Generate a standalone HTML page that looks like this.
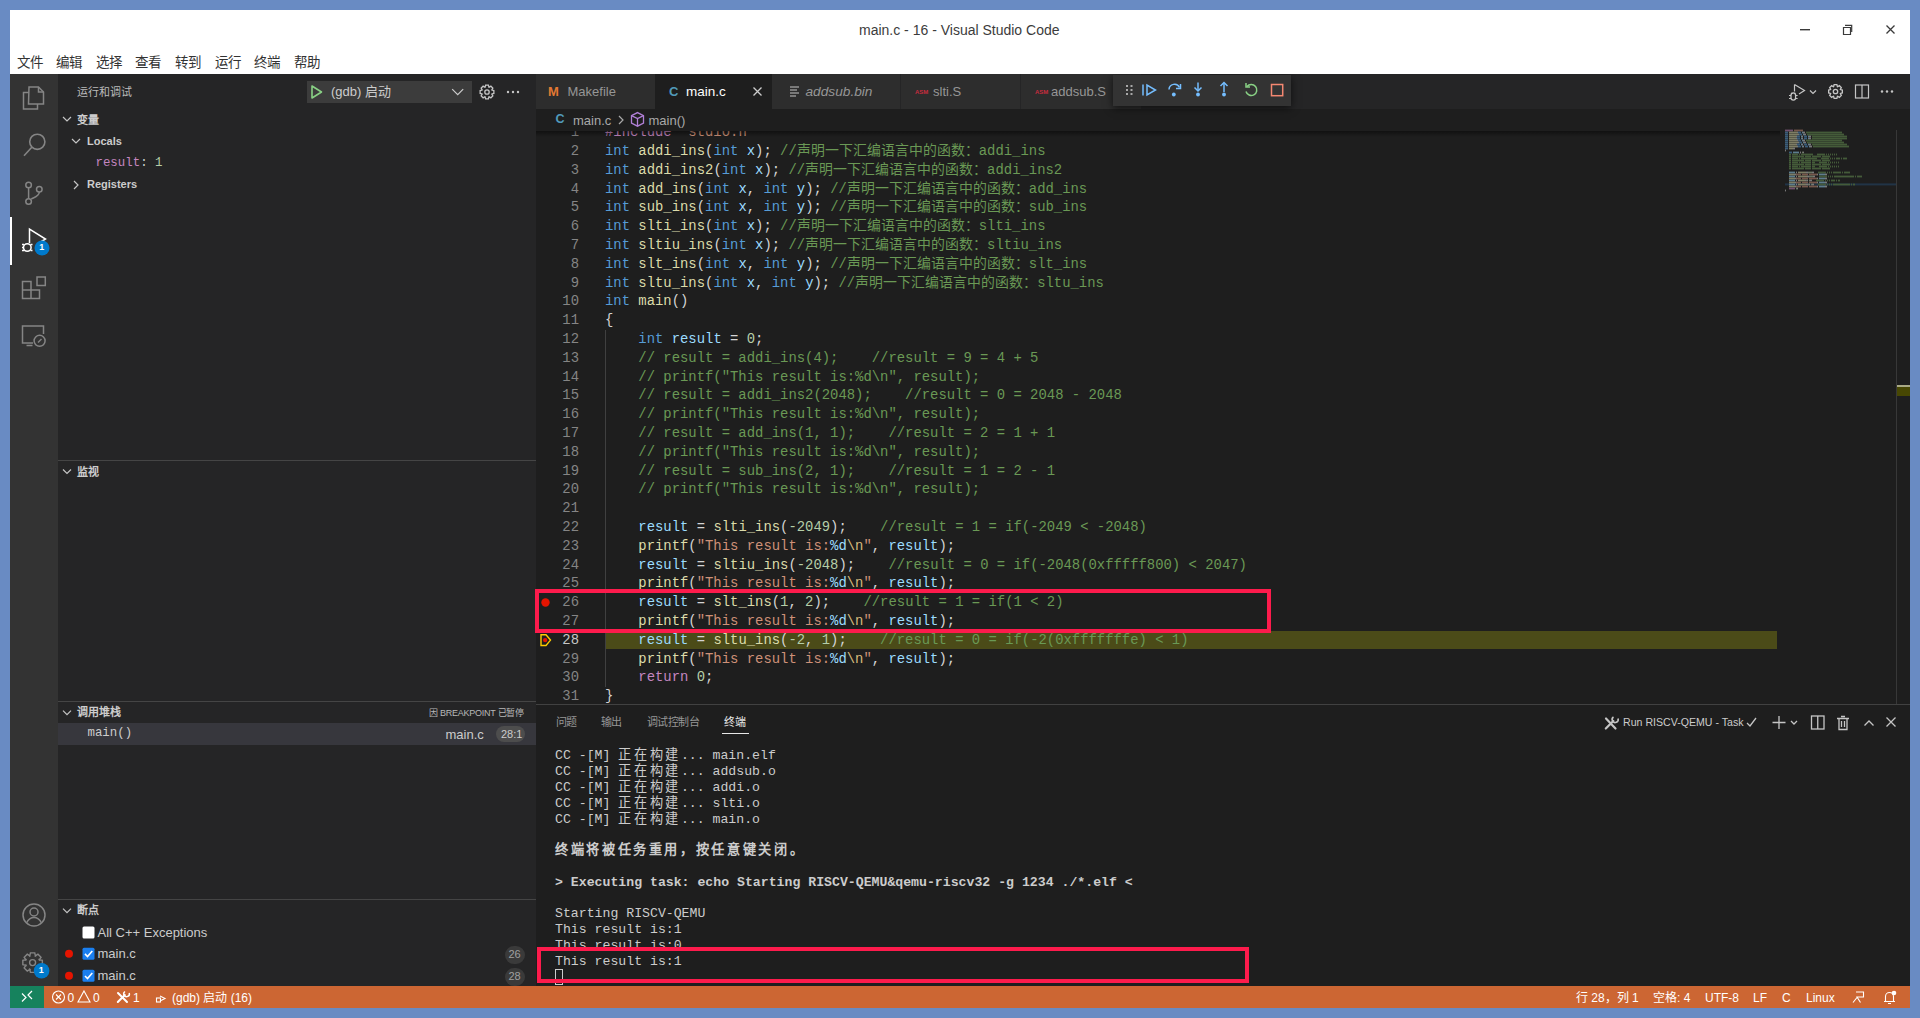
<!DOCTYPE html>
<html lang="zh-CN"><head><meta charset="utf-8"><title>VS Code</title><style>
*{margin:0;padding:0;box-sizing:border-box}
html,body{width:1920px;height:1018px;overflow:hidden;background:#698bc3;font-family:"Liberation Sans",sans-serif}
.a{position:absolute}
.t{position:absolute;white-space:pre;line-height:1}
.m{font-family:"Liberation Mono",monospace}
svg{position:absolute;overflow:visible}
.code{position:absolute;left:605px;white-space:pre;font-family:"Liberation Mono",monospace;font-size:13.9px;line-height:18.8px;height:18.8px;color:#d4d4d4}
.ln{position:absolute;left:536px;width:43px;text-align:right;white-space:pre;font-family:"Liberation Mono",monospace;font-size:13.9px;line-height:18.8px;color:#858585}
.term{position:absolute;left:555px;white-space:pre;font-family:"Liberation Mono",monospace;font-size:13.2px;line-height:16px;height:16px;color:#cccccc}
.cj{letter-spacing:2.64px}
.sb{font-size:11px;font-weight:bold;color:#cccccc}
</style></head>
<body>
<div class="a" style="left:10px;top:10px;width:1900px;height:998px;background:#1e1e1e;"></div>
<div class="a" style="left:10px;top:10px;width:1900px;height:64px;background:#ffffff;"></div>
<div class="t" style="left:859px;top:23px;font-size:14px;color:#3c3c3c;">main.c - 16 - Visual Studio Code</div>
<div class="t" style="left:16.5px;top:56px;font-size:13.5px;color:#333333;">文件</div>
<div class="t" style="left:56.1px;top:56px;font-size:13.5px;color:#333333;">编辑</div>
<div class="t" style="left:95.7px;top:56px;font-size:13.5px;color:#333333;">选择</div>
<div class="t" style="left:135.3px;top:56px;font-size:13.5px;color:#333333;">查看</div>
<div class="t" style="left:174.9px;top:56px;font-size:13.5px;color:#333333;">转到</div>
<div class="t" style="left:214.5px;top:56px;font-size:13.5px;color:#333333;">运行</div>
<div class="t" style="left:254.1px;top:56px;font-size:13.5px;color:#333333;">终端</div>
<div class="t" style="left:293.7px;top:56px;font-size:13.5px;color:#333333;">帮助</div>
<svg style="left:1800px;top:29px" width="12" height="2"><rect x="0" y="0" width="10" height="1.4" fill="#3a3a3a"/></svg>
<svg style="left:1842px;top:24px" width="12" height="12"><path d="M1.5 3.5h7v7h-7z" fill="none" stroke="#3a3a3a" stroke-width="1.2"/><path d="M3 1.3h6.7v6.8" fill="none" stroke="#3a3a3a" stroke-width="1.2"/></svg>
<svg style="left:1886px;top:25px" width="10" height="10"><path d="M0.5 0.5L8.5 8.5M8.5 0.5L0.5 8.5" stroke="#3a3a3a" stroke-width="1.3"/></svg>
<div class="a" style="left:10px;top:74px;width:48px;height:912px;background:#333333;"></div>
<div class="a" style="left:10px;top:217px;width:2px;height:48px;background:#ffffff;"></div>
<svg style="left:0;top:0" width="1" height="1"><g fill="none" stroke="#858585" stroke-width="1.5"><path d="M29 87h9.5l5 5v12h-15z"/><path d="M38.5 87v5h5"/><path d="M29 92.5h-5.5v16.5h14v-5"/></g></svg>
<svg style="left:0;top:0" width="1" height="1"><g fill="none" stroke="#858585" stroke-width="1.6"><circle cx="37.3" cy="141.8" r="7.6"/><path d="M31.8 147.3L24 155.8"/></g></svg>
<svg style="left:0;top:0" width="1" height="1"><g fill="none" stroke="#858585" stroke-width="1.5"><circle cx="28.6" cy="185" r="2.8"/><circle cx="39.3" cy="189.2" r="2.8"/><circle cx="28.6" cy="201.5" r="2.8"/><path d="M28.6 187.8v10.9"/><path d="M39.3 192c0 4-4 5-8 7"/></g></svg>
<svg style="left:0;top:0" width="1" height="1"><g fill="none" stroke="#ffffff" stroke-width="1.5"><path d="M29.5 243V229l16 10-8 5"/><circle cx="27.3" cy="247.5" r="3.8"/><path d="M22 244.5h2M22 247.5h2M22 250.5h2.5M30.5 244.5h2M30.5 250.5h2"/></g><circle cx="42" cy="248" r="7.5" fill="#007acc"/></svg>
<div class="t" style="left:39.2px;top:243px;font-size:9px;color:#ffffff;font-weight:bold">1</div>
<svg style="left:0;top:0" width="1" height="1"><g fill="none" stroke="#858585" stroke-width="1.5"><path d="M22.5 281.5h8.5v17h-8.5zM22.5 290h17v8.5h-8.5"/><path d="M37 277h8.3v8.5h-8.3z"/></g></svg>
<svg style="left:0;top:0" width="1" height="1"><g fill="none" stroke="#858585" stroke-width="1.5"><path d="M33 343h-10.5v-17h21v8"/><path d="M26.5 345.5h6"/><circle cx="39.6" cy="340.8" r="5.5"/><path d="M38 342.5l3.5-3.5"/></g></svg>
<svg style="left:0;top:0" width="1" height="1"><g fill="none" stroke="#858585" stroke-width="1.5"><circle cx="34" cy="915" r="11"/><circle cx="34" cy="912" r="4"/><path d="M26.5 923c2-4 4.5-5.5 7.5-5.5s5.5 1.5 7.5 5.5"/></g></svg>
<svg style="left:0;top:0" width="1" height="1"><g fill="none" stroke="#858585" stroke-width="1.4"><path d="M42.36 960.42 L42.36 964.78 L39.23 965.40 L39.27 965.31 L41.04 967.96 L37.96 971.04 L35.31 969.27 L35.40 969.23 L34.78 972.36 L30.42 972.36 L29.80 969.23 L29.89 969.27 L27.24 971.04 L24.16 967.96 L25.93 965.31 L25.97 965.40 L22.84 964.78 L22.84 960.42 L25.97 959.80 L25.93 959.89 L24.16 957.24 L27.24 954.16 L29.89 955.93 L29.80 955.97 L30.42 952.84 L34.78 952.84 L35.40 955.97 L35.31 955.93 L37.96 954.16 L41.04 957.24 L39.27 959.89 L39.23 959.80Z"/><circle cx="32.6" cy="962.6" r="3"/></g><circle cx="41.6" cy="970.7" r="7.8" fill="#007acc"/></svg>
<div class="t" style="left:38.8px;top:965.5px;font-size:9px;color:#ffffff;font-weight:bold">1</div>
<div class="a" style="left:58px;top:74px;width:478px;height:912px;background:#252526;"></div>
<div class="t" style="left:77px;top:87px;font-size:11px;color:#bbbbbb;">运行和调试</div>
<div class="a" style="left:307px;top:81px;width:165px;height:22px;background:#3c3c3c;"></div>
<svg style="left:0;top:0" width="1" height="1"><path d="M312 86v12l9.5-6z" fill="none" stroke="#89d185" stroke-width="1.6" stroke-linejoin="round"/><path d="M452.2 89.2l5.5 5.5 5.5-5.5" fill="none" stroke="#cccccc" stroke-width="1.2"/></svg>
<div class="t" style="left:331px;top:85px;font-size:13px;color:#cccccc;">(gdb) 启动</div>
<svg style="left:0;top:0" width="1" height="1"><g fill="none" stroke="#c5c5c5" stroke-width="1.3"><path d="M493.86 90.61 L493.86 93.39 L491.83 93.93 L491.78 94.05 L492.83 95.87 L490.87 97.83 L489.05 96.78 L488.93 96.83 L488.39 98.86 L485.61 98.86 L485.07 96.83 L484.95 96.78 L483.13 97.83 L481.17 95.87 L482.22 94.05 L482.17 93.93 L480.14 93.39 L480.14 90.61 L482.17 90.07 L482.22 89.95 L481.17 88.13 L483.13 86.17 L484.95 87.22 L485.07 87.17 L485.61 85.14 L488.39 85.14 L488.93 87.17 L489.05 87.22 L490.87 86.17 L492.83 88.13 L491.78 89.95 L491.83 90.07Z"/><circle cx="487" cy="92" r="2.2"/></g></svg>
<svg style="left:0;top:0" width="1" height="1"><g fill="#c5c5c5"><circle cx="508" cy="92" r="1.2"/><circle cx="513" cy="92" r="1.2"/><circle cx="518" cy="92" r="1.2"/></g></svg>
<svg style="left:0;top:0" width="1" height="1"><path d="M63 117l4 4 4-4" fill="none" stroke="#c5c5c5" stroke-width="1.2"/></svg>
<div class="t" style="left:77px;top:114.5px;font-size:11px;color:#cccccc;font-weight:bold">变量</div>
<svg style="left:0;top:0" width="1" height="1"><path d="M72 139l4 4 4-4" fill="none" stroke="#c5c5c5" stroke-width="1.2"/></svg>
<div class="t" style="left:87px;top:135.5px;font-size:11px;color:#cccccc;font-weight:bold">Locals</div>
<div class="t m" style="left:95.5px;top:156.5px;font-size:12.4px;color:#c586c0">result<span style="color:#cccccc">: </span><span style="color:#b5cea8">1</span></div>
<svg style="left:0;top:0" width="1" height="1"><path d="M74 181l4 4-4 4" fill="none" stroke="#c5c5c5" stroke-width="1.2"/></svg>
<div class="t" style="left:87px;top:179px;font-size:11px;color:#cccccc;font-weight:bold">Registers</div>
<div class="a" style="left:58px;top:460px;width:478px;height:1px;background:#454545;"></div>
<svg style="left:0;top:0" width="1" height="1"><path d="M63 469.5l4 4 4-4" fill="none" stroke="#c5c5c5" stroke-width="1.2"/></svg>
<div class="t" style="left:77px;top:467px;font-size:11px;color:#cccccc;font-weight:bold">监视</div>
<div class="a" style="left:58px;top:701px;width:478px;height:1px;background:#454545;"></div>
<svg style="left:0;top:0" width="1" height="1"><path d="M63 710.7l4 4 4-4" fill="none" stroke="#c5c5c5" stroke-width="1.2"/></svg>
<div class="t" style="left:77px;top:707px;font-size:11px;color:#cccccc;font-weight:bold">调用堆栈</div>
<div class="t" style="left:429px;top:709.2px;font-size:9px;color:#b8b8b8;letter-spacing:-0.25px">因 BREAKPOINT 已暂停</div>
<div class="a" style="left:58px;top:723px;width:478px;height:22px;background:#37373d;"></div>
<div class="t m" style="left:87.5px;top:727px;font-size:12.4px;color:#cccccc;">main()</div>
<div class="t" style="left:445.5px;top:728px;font-size:13px;color:#cccccc;">main.c</div>
<div class="a" style="left:496px;top:726px;width:29px;height:16px;background:#4d4d4d;border-radius:8px"></div>
<div class="t" style="left:501px;top:729px;font-size:11px;color:#cccccc;">28:1</div>
<div class="a" style="left:58px;top:899px;width:478px;height:1px;background:#454545;"></div>
<svg style="left:0;top:0" width="1" height="1"><path d="M63 908.7l4 4 4-4" fill="none" stroke="#c5c5c5" stroke-width="1.2"/></svg>
<div class="t" style="left:77px;top:905px;font-size:11px;color:#cccccc;font-weight:bold">断点</div>
<svg style="left:0;top:0" width="1" height="1"><rect x="82.5" y="926.5" width="12" height="12" rx="1.5" fill="#ffffff"/></svg>
<div class="t" style="left:97.5px;top:926px;font-size:13px;color:#cccccc;">All C++ Exceptions</div>
<svg style="left:0;top:0" width="1" height="1"><circle cx="69" cy="953.7" r="4" fill="#e51400"/></svg>
<svg style="left:0;top:0" width="1" height="1"><rect x="82.5" y="947.7" width="12" height="12" rx="1.5" fill="#1a7ff0"/><path d="M85.0 953.9000000000001l2.5 2.6 4.8-5.6" fill="none" stroke="#fff" stroke-width="1.6"/></svg>
<div class="t" style="left:97.5px;top:947.2px;font-size:13px;color:#cccccc;">main.c</div>
<div class="a" style="left:505px;top:945.7px;width:20px;height:18px;background:#3a3a3a;border-radius:9px"></div>
<div class="t" style="left:508.5px;top:949.2px;font-size:11px;color:#a0a0a0;">26</div>
<svg style="left:0;top:0" width="1" height="1"><circle cx="69" cy="975.8" r="4" fill="#e51400"/></svg>
<svg style="left:0;top:0" width="1" height="1"><rect x="82.5" y="969.8" width="12" height="12" rx="1.5" fill="#1a7ff0"/><path d="M85.0 976.0l2.5 2.6 4.8-5.6" fill="none" stroke="#fff" stroke-width="1.6"/></svg>
<div class="t" style="left:97.5px;top:969.3px;font-size:13px;color:#cccccc;">main.c</div>
<div class="a" style="left:505px;top:967.8px;width:20px;height:18px;background:#3a3a3a;border-radius:9px"></div>
<div class="t" style="left:508.5px;top:971.3px;font-size:11px;color:#a0a0a0;">28</div>
<div class="a" style="left:536px;top:74px;width:1374px;height:35px;background:#252526;"></div>
<div class="a" style="left:536px;top:74px;width:119px;height:35px;background:#2d2d2d;"></div>
<div class="a" style="left:655px;top:74px;width:117px;height:35px;background:#1e1e1e;"></div>
<div class="a" style="left:772px;top:74px;width:128px;height:35px;background:#2d2d2d;"></div>
<div class="a" style="left:901px;top:74px;width:119px;height:35px;background:#2d2d2d;"></div>
<div class="a" style="left:1021px;top:74px;width:120px;height:35px;background:#2d2d2d;"></div>
<div class="t" style="left:548px;top:85px;font-size:13px;color:#e37933;font-weight:bold">M</div>
<div class="t" style="left:567.5px;top:85px;font-size:13px;color:#969696;">Makefile</div>
<div class="t" style="left:669px;top:85px;font-size:13px;color:#519aba;font-weight:bold">C</div>
<div class="t" style="left:686px;top:84.5px;font-size:13.5px;color:#ffffff;">main.c</div>
<svg style="left:0;top:0" width="1" height="1"><path d="M753.5 87.5l8 8M761.5 87.5l-8 8" stroke="#cccccc" stroke-width="1.3"/></svg>
<svg style="left:0;top:0" width="1" height="1"><path d="M790 87h9M790 90h7M790 93h9M790 96h6" stroke="#c5c5c5" stroke-width="1.2"/></svg>
<div class="t" style="left:805.5px;top:84.5px;font-size:13.7px;color:#969696;font-style:italic">addsub.bin</div>
<div class="t" style="left:915px;top:88.5px;font-size:6px;color:#c72c3e;font-weight:bold">ASM</div>
<div class="t" style="left:933px;top:85px;font-size:13px;color:#969696;">slti.S</div>
<div class="t" style="left:1035px;top:88.5px;font-size:6px;color:#c72c3e;font-weight:bold">ASM</div>
<div class="t" style="left:1051px;top:85px;font-size:13px;color:#969696;">addsub.S</div>
<div class="a" style="left:536px;top:109px;width:1374px;height:22px;background:#1e1e1e;"></div>
<div class="a" style="left:605px;top:630.7px;width:1172px;height:18.8px;background:#4b4b18;"></div>
<div class="a" style="left:605px;top:329.9px;width:1px;height:357.2px;background:#404040"></div>
<div class="ln" style="top:123.1px;color:#858585">1</div>
<div class="code" style="top:123.1px"><span style="color:#c586c0">#include</span> <span style="color:#ce9178">"stdio.h"</span></div>
<div class="ln" style="top:141.9px;color:#858585">2</div>
<div class="code" style="top:141.9px"><span style="color:#569cd6">int</span> <span style="color:#dcdcaa">addi_ins</span>(<span style="color:#569cd6">int</span> <span style="color:#9cdcfe">x</span>); <span style="color:#6a9955">//声明一下汇编语言中的函数：addi_ins</span></div>
<div class="ln" style="top:160.7px;color:#858585">3</div>
<div class="code" style="top:160.7px"><span style="color:#569cd6">int</span> <span style="color:#dcdcaa">addi_ins2</span>(<span style="color:#569cd6">int</span> <span style="color:#9cdcfe">x</span>); <span style="color:#6a9955">//声明一下汇编语言中的函数：addi_ins2</span></div>
<div class="ln" style="top:179.5px;color:#858585">4</div>
<div class="code" style="top:179.5px"><span style="color:#569cd6">int</span> <span style="color:#dcdcaa">add_ins</span>(<span style="color:#569cd6">int</span> <span style="color:#9cdcfe">x</span>, <span style="color:#569cd6">int</span> <span style="color:#9cdcfe">y</span>); <span style="color:#6a9955">//声明一下汇编语言中的函数：add_ins</span></div>
<div class="ln" style="top:198.3px;color:#858585">5</div>
<div class="code" style="top:198.3px"><span style="color:#569cd6">int</span> <span style="color:#dcdcaa">sub_ins</span>(<span style="color:#569cd6">int</span> <span style="color:#9cdcfe">x</span>, <span style="color:#569cd6">int</span> <span style="color:#9cdcfe">y</span>); <span style="color:#6a9955">//声明一下汇编语言中的函数：sub_ins</span></div>
<div class="ln" style="top:217.1px;color:#858585">6</div>
<div class="code" style="top:217.1px"><span style="color:#569cd6">int</span> <span style="color:#dcdcaa">slti_ins</span>(<span style="color:#569cd6">int</span> <span style="color:#9cdcfe">x</span>); <span style="color:#6a9955">//声明一下汇编语言中的函数：slti_ins</span></div>
<div class="ln" style="top:235.9px;color:#858585">7</div>
<div class="code" style="top:235.9px"><span style="color:#569cd6">int</span> <span style="color:#dcdcaa">sltiu_ins</span>(<span style="color:#569cd6">int</span> <span style="color:#9cdcfe">x</span>); <span style="color:#6a9955">//声明一下汇编语言中的函数：sltiu_ins</span></div>
<div class="ln" style="top:254.7px;color:#858585">8</div>
<div class="code" style="top:254.7px"><span style="color:#569cd6">int</span> <span style="color:#dcdcaa">slt_ins</span>(<span style="color:#569cd6">int</span> <span style="color:#9cdcfe">x</span>, <span style="color:#569cd6">int</span> <span style="color:#9cdcfe">y</span>); <span style="color:#6a9955">//声明一下汇编语言中的函数：slt_ins</span></div>
<div class="ln" style="top:273.5px;color:#858585">9</div>
<div class="code" style="top:273.5px"><span style="color:#569cd6">int</span> <span style="color:#dcdcaa">sltu_ins</span>(<span style="color:#569cd6">int</span> <span style="color:#9cdcfe">x</span>, <span style="color:#569cd6">int</span> <span style="color:#9cdcfe">y</span>); <span style="color:#6a9955">//声明一下汇编语言中的函数：sltu_ins</span></div>
<div class="ln" style="top:292.3px;color:#858585">10</div>
<div class="code" style="top:292.3px"><span style="color:#569cd6">int</span> <span style="color:#dcdcaa">main</span>()</div>
<div class="ln" style="top:311.1px;color:#858585">11</div>
<div class="code" style="top:311.1px">{</div>
<div class="ln" style="top:329.9px;color:#858585">12</div>
<div class="code" style="top:329.9px">    <span style="color:#569cd6">int</span> <span style="color:#9cdcfe">result</span> = <span style="color:#b5cea8">0</span>;</div>
<div class="ln" style="top:348.7px;color:#858585">13</div>
<div class="code" style="top:348.7px">    <span style="color:#6a9955">// result = addi_ins(4);    //result = 9 = 4 + 5</span></div>
<div class="ln" style="top:367.5px;color:#858585">14</div>
<div class="code" style="top:367.5px">    <span style="color:#6a9955">// printf("This result is:%d\n", result);</span></div>
<div class="ln" style="top:386.3px;color:#858585">15</div>
<div class="code" style="top:386.3px">    <span style="color:#6a9955">// result = addi_ins2(2048);    //result = 0 = 2048 - 2048</span></div>
<div class="ln" style="top:405.1px;color:#858585">16</div>
<div class="code" style="top:405.1px">    <span style="color:#6a9955">// printf("This result is:%d\n", result);</span></div>
<div class="ln" style="top:423.9px;color:#858585">17</div>
<div class="code" style="top:423.9px">    <span style="color:#6a9955">// result = add_ins(1, 1);    //result = 2 = 1 + 1</span></div>
<div class="ln" style="top:442.7px;color:#858585">18</div>
<div class="code" style="top:442.7px">    <span style="color:#6a9955">// printf("This result is:%d\n", result);</span></div>
<div class="ln" style="top:461.5px;color:#858585">19</div>
<div class="code" style="top:461.5px">    <span style="color:#6a9955">// result = sub_ins(2, 1);    //result = 1 = 2 - 1</span></div>
<div class="ln" style="top:480.3px;color:#858585">20</div>
<div class="code" style="top:480.3px">    <span style="color:#6a9955">// printf("This result is:%d\n", result);</span></div>
<div class="ln" style="top:499.1px;color:#858585">21</div>
<div class="code" style="top:499.1px"></div>
<div class="ln" style="top:517.9px;color:#858585">22</div>
<div class="code" style="top:517.9px">    <span style="color:#9cdcfe">result</span> = <span style="color:#dcdcaa">slti_ins</span>(<span style="color:#b5cea8">-2049</span>);    <span style="color:#6a9955">//result = 1 = if(-2049 &lt; -2048)</span></div>
<div class="ln" style="top:536.7px;color:#858585">23</div>
<div class="code" style="top:536.7px">    <span style="color:#dcdcaa">printf</span>(<span style="color:#ce9178">"This result is:</span><span style="color:#9cdcfe">%d</span><span style="color:#ce9178"></span><span style="color:#d7ba7d">\n</span><span style="color:#ce9178">"</span>, <span style="color:#9cdcfe">result</span>);</div>
<div class="ln" style="top:555.5px;color:#858585">24</div>
<div class="code" style="top:555.5px">    <span style="color:#9cdcfe">result</span> = <span style="color:#dcdcaa">sltiu_ins</span>(<span style="color:#b5cea8">-2048</span>);    <span style="color:#6a9955">//result = 0 = if(-2048(0xfffff800) &lt; 2047)</span></div>
<div class="ln" style="top:574.3px;color:#858585">25</div>
<div class="code" style="top:574.3px">    <span style="color:#dcdcaa">printf</span>(<span style="color:#ce9178">"This result is:</span><span style="color:#9cdcfe">%d</span><span style="color:#ce9178"></span><span style="color:#d7ba7d">\n</span><span style="color:#ce9178">"</span>, <span style="color:#9cdcfe">result</span>);</div>
<div class="ln" style="top:593.1px;color:#858585">26</div>
<div class="code" style="top:593.1px">    <span style="color:#9cdcfe">result</span> = <span style="color:#dcdcaa">slt_ins</span>(<span style="color:#b5cea8">1</span>, <span style="color:#b5cea8">2</span>);    <span style="color:#6a9955">//result = 1 = if(1 &lt; 2)</span></div>
<div class="ln" style="top:611.9px;color:#858585">27</div>
<div class="code" style="top:611.9px">    <span style="color:#dcdcaa">printf</span>(<span style="color:#ce9178">"This result is:</span><span style="color:#9cdcfe">%d</span><span style="color:#ce9178"></span><span style="color:#d7ba7d">\n</span><span style="color:#ce9178">"</span>, <span style="color:#9cdcfe">result</span>);</div>
<div class="ln" style="top:630.7px;color:#c6c6c6">28</div>
<div class="code" style="top:630.7px">    <span style="color:#9cdcfe">result</span> = <span style="color:#dcdcaa">sltu_ins</span>(<span style="color:#b5cea8">-2</span>, <span style="color:#b5cea8">1</span>);    <span style="color:#6a9955">//result = 0 = if(-2(0xfffffffe) &lt; 1)</span></div>
<div class="ln" style="top:649.5px;color:#858585">29</div>
<div class="code" style="top:649.5px">    <span style="color:#dcdcaa">printf</span>(<span style="color:#ce9178">"This result is:</span><span style="color:#9cdcfe">%d</span><span style="color:#ce9178"></span><span style="color:#d7ba7d">\n</span><span style="color:#ce9178">"</span>, <span style="color:#9cdcfe">result</span>);</div>
<div class="ln" style="top:668.3px;color:#858585">30</div>
<div class="code" style="top:668.3px">    <span style="color:#c586c0">return</span> <span style="color:#b5cea8">0</span>;</div>
<div class="ln" style="top:687.1px;color:#858585">31</div>
<div class="code" style="top:687.1px">}</div>
<svg style="left:0;top:0" width="1" height="1"><circle cx="545.5" cy="602.5" r="4.2" fill="#e51400"/><path d="M541 634.7h5l4.5 5.4-4.5 5.4h-5z" fill="none" stroke="#ffcc00" stroke-width="1.4"/><circle cx="545.2" cy="640.1" r="2.2" fill="#e51400"/></svg>
<div class="a" style="left:536px;top:109px;width:1374px;height:22px;background:#1e1e1e;"></div>
<div class="a" style="left:536px;top:131px;width:1244px;height:6px;background:linear-gradient(#00000070,#00000000)"></div>
<div class="t" style="left:555.5px;top:113px;font-size:12.5px;color:#519aba;font-weight:bold">C</div>
<div class="t" style="left:573px;top:113.5px;font-size:13px;color:#a9a9a9;">main.c</div>
<svg style="left:0;top:0" width="1" height="1"><path d="M619 116l4 4-4 4" fill="none" stroke="#a9a9a9" stroke-width="1.2"/></svg>
<svg style="left:0;top:0" width="1" height="1"><g fill="none" stroke="#b180d7" stroke-width="1.3"><path d="M631.5 115.6l6-3 6 3v7.6l-6 3-6-3z"/><path d="M631.5 115.6l6 3 6-3M637.5 118.6v7.6"/></g></svg>
<div class="t" style="left:648.5px;top:113.5px;font-size:13px;color:#a9a9a9;">main()</div>
<svg style="left:0;top:0" width="1" height="1"><g opacity="0.5"><rect x="1785" y="183.4" width="111" height="2" fill="#264f78" opacity="0.9"/><rect x="1785" y="129.6" width="8" height="1.8" fill="#c586c0"/><rect x="1794" y="129.6" width="9" height="1.8" fill="#ce9178"/><rect x="1785" y="131.6" width="3" height="1.8" fill="#569cd6"/><rect x="1789" y="131.6" width="8" height="1.8" fill="#dcdcaa"/><rect x="1797" y="131.6" width="1" height="1.8" fill="#d4d4d4"/><rect x="1798" y="131.6" width="3" height="1.8" fill="#569cd6"/><rect x="1802" y="131.6" width="1" height="1.8" fill="#9cdcfe"/><rect x="1803" y="131.6" width="2" height="1.8" fill="#d4d4d4"/><rect x="1806" y="131.6" width="36" height="1.8" fill="#6a9955"/><rect x="1785" y="133.6" width="3" height="1.8" fill="#569cd6"/><rect x="1789" y="133.6" width="9" height="1.8" fill="#dcdcaa"/><rect x="1798" y="133.6" width="1" height="1.8" fill="#d4d4d4"/><rect x="1799" y="133.6" width="3" height="1.8" fill="#569cd6"/><rect x="1803" y="133.6" width="1" height="1.8" fill="#9cdcfe"/><rect x="1804" y="133.6" width="2" height="1.8" fill="#d4d4d4"/><rect x="1807" y="133.6" width="37" height="1.8" fill="#6a9955"/><rect x="1785" y="135.6" width="3" height="1.8" fill="#569cd6"/><rect x="1789" y="135.6" width="7" height="1.8" fill="#dcdcaa"/><rect x="1796" y="135.6" width="1" height="1.8" fill="#d4d4d4"/><rect x="1797" y="135.6" width="3" height="1.8" fill="#569cd6"/><rect x="1801" y="135.6" width="1" height="1.8" fill="#9cdcfe"/><rect x="1802" y="135.6" width="1" height="1.8" fill="#d4d4d4"/><rect x="1804" y="135.6" width="3" height="1.8" fill="#569cd6"/><rect x="1808" y="135.6" width="1" height="1.8" fill="#9cdcfe"/><rect x="1809" y="135.6" width="2" height="1.8" fill="#d4d4d4"/><rect x="1812" y="135.6" width="35" height="1.8" fill="#6a9955"/><rect x="1785" y="137.6" width="3" height="1.8" fill="#569cd6"/><rect x="1789" y="137.6" width="7" height="1.8" fill="#dcdcaa"/><rect x="1796" y="137.6" width="1" height="1.8" fill="#d4d4d4"/><rect x="1797" y="137.6" width="3" height="1.8" fill="#569cd6"/><rect x="1801" y="137.6" width="1" height="1.8" fill="#9cdcfe"/><rect x="1802" y="137.6" width="1" height="1.8" fill="#d4d4d4"/><rect x="1804" y="137.6" width="3" height="1.8" fill="#569cd6"/><rect x="1808" y="137.6" width="1" height="1.8" fill="#9cdcfe"/><rect x="1809" y="137.6" width="2" height="1.8" fill="#d4d4d4"/><rect x="1812" y="137.6" width="35" height="1.8" fill="#6a9955"/><rect x="1785" y="139.6" width="3" height="1.8" fill="#569cd6"/><rect x="1789" y="139.6" width="8" height="1.8" fill="#dcdcaa"/><rect x="1797" y="139.6" width="1" height="1.8" fill="#d4d4d4"/><rect x="1798" y="139.6" width="3" height="1.8" fill="#569cd6"/><rect x="1802" y="139.6" width="1" height="1.8" fill="#9cdcfe"/><rect x="1803" y="139.6" width="2" height="1.8" fill="#d4d4d4"/><rect x="1806" y="139.6" width="36" height="1.8" fill="#6a9955"/><rect x="1785" y="141.6" width="3" height="1.8" fill="#569cd6"/><rect x="1789" y="141.6" width="9" height="1.8" fill="#dcdcaa"/><rect x="1798" y="141.6" width="1" height="1.8" fill="#d4d4d4"/><rect x="1799" y="141.6" width="3" height="1.8" fill="#569cd6"/><rect x="1803" y="141.6" width="1" height="1.8" fill="#9cdcfe"/><rect x="1804" y="141.6" width="2" height="1.8" fill="#d4d4d4"/><rect x="1807" y="141.6" width="37" height="1.8" fill="#6a9955"/><rect x="1785" y="143.6" width="3" height="1.8" fill="#569cd6"/><rect x="1789" y="143.6" width="7" height="1.8" fill="#dcdcaa"/><rect x="1796" y="143.6" width="1" height="1.8" fill="#d4d4d4"/><rect x="1797" y="143.6" width="3" height="1.8" fill="#569cd6"/><rect x="1801" y="143.6" width="1" height="1.8" fill="#9cdcfe"/><rect x="1802" y="143.6" width="1" height="1.8" fill="#d4d4d4"/><rect x="1804" y="143.6" width="3" height="1.8" fill="#569cd6"/><rect x="1808" y="143.6" width="1" height="1.8" fill="#9cdcfe"/><rect x="1809" y="143.6" width="2" height="1.8" fill="#d4d4d4"/><rect x="1812" y="143.6" width="35" height="1.8" fill="#6a9955"/><rect x="1785" y="145.6" width="3" height="1.8" fill="#569cd6"/><rect x="1789" y="145.6" width="8" height="1.8" fill="#dcdcaa"/><rect x="1797" y="145.6" width="1" height="1.8" fill="#d4d4d4"/><rect x="1798" y="145.6" width="3" height="1.8" fill="#569cd6"/><rect x="1802" y="145.6" width="1" height="1.8" fill="#9cdcfe"/><rect x="1803" y="145.6" width="1" height="1.8" fill="#d4d4d4"/><rect x="1805" y="145.6" width="3" height="1.8" fill="#569cd6"/><rect x="1809" y="145.6" width="1" height="1.8" fill="#9cdcfe"/><rect x="1810" y="145.6" width="2" height="1.8" fill="#d4d4d4"/><rect x="1813" y="145.6" width="36" height="1.8" fill="#6a9955"/><rect x="1785" y="147.6" width="3" height="1.8" fill="#569cd6"/><rect x="1789" y="147.6" width="4" height="1.8" fill="#dcdcaa"/><rect x="1793" y="147.6" width="2" height="1.8" fill="#d4d4d4"/><rect x="1785" y="149.6" width="1" height="1.8" fill="#d4d4d4"/><rect x="1789" y="151.6" width="3" height="1.8" fill="#569cd6"/><rect x="1793" y="151.6" width="6" height="1.8" fill="#9cdcfe"/><rect x="1800" y="151.6" width="1" height="1.8" fill="#d4d4d4"/><rect x="1802" y="151.6" width="1" height="1.8" fill="#b5cea8"/><rect x="1803" y="151.6" width="1" height="1.8" fill="#d4d4d4"/><rect x="1789" y="153.6" width="2" height="1.8" fill="#6a9955"/><rect x="1792" y="153.6" width="6" height="1.8" fill="#6a9955"/><rect x="1799" y="153.6" width="1" height="1.8" fill="#6a9955"/><rect x="1801" y="153.6" width="12" height="1.8" fill="#6a9955"/><rect x="1817" y="153.6" width="8" height="1.8" fill="#6a9955"/><rect x="1826" y="153.6" width="1" height="1.8" fill="#6a9955"/><rect x="1828" y="153.6" width="1" height="1.8" fill="#6a9955"/><rect x="1830" y="153.6" width="1" height="1.8" fill="#6a9955"/><rect x="1832" y="153.6" width="1" height="1.8" fill="#6a9955"/><rect x="1834" y="153.6" width="1" height="1.8" fill="#6a9955"/><rect x="1836" y="153.6" width="1" height="1.8" fill="#6a9955"/><rect x="1789" y="155.6" width="2" height="1.8" fill="#6a9955"/><rect x="1792" y="155.6" width="12" height="1.8" fill="#6a9955"/><rect x="1805" y="155.6" width="6" height="1.8" fill="#6a9955"/><rect x="1812" y="155.6" width="9" height="1.8" fill="#6a9955"/><rect x="1822" y="155.6" width="8" height="1.8" fill="#6a9955"/><rect x="1789" y="157.6" width="2" height="1.8" fill="#6a9955"/><rect x="1792" y="157.6" width="6" height="1.8" fill="#6a9955"/><rect x="1799" y="157.6" width="1" height="1.8" fill="#6a9955"/><rect x="1801" y="157.6" width="16" height="1.8" fill="#6a9955"/><rect x="1821" y="157.6" width="8" height="1.8" fill="#6a9955"/><rect x="1830" y="157.6" width="1" height="1.8" fill="#6a9955"/><rect x="1832" y="157.6" width="1" height="1.8" fill="#6a9955"/><rect x="1834" y="157.6" width="1" height="1.8" fill="#6a9955"/><rect x="1836" y="157.6" width="4" height="1.8" fill="#6a9955"/><rect x="1841" y="157.6" width="1" height="1.8" fill="#6a9955"/><rect x="1843" y="157.6" width="4" height="1.8" fill="#6a9955"/><rect x="1789" y="159.6" width="2" height="1.8" fill="#6a9955"/><rect x="1792" y="159.6" width="12" height="1.8" fill="#6a9955"/><rect x="1805" y="159.6" width="6" height="1.8" fill="#6a9955"/><rect x="1812" y="159.6" width="9" height="1.8" fill="#6a9955"/><rect x="1822" y="159.6" width="8" height="1.8" fill="#6a9955"/><rect x="1789" y="161.6" width="2" height="1.8" fill="#6a9955"/><rect x="1792" y="161.6" width="6" height="1.8" fill="#6a9955"/><rect x="1799" y="161.6" width="1" height="1.8" fill="#6a9955"/><rect x="1801" y="161.6" width="10" height="1.8" fill="#6a9955"/><rect x="1812" y="161.6" width="3" height="1.8" fill="#6a9955"/><rect x="1819" y="161.6" width="8" height="1.8" fill="#6a9955"/><rect x="1828" y="161.6" width="1" height="1.8" fill="#6a9955"/><rect x="1830" y="161.6" width="1" height="1.8" fill="#6a9955"/><rect x="1832" y="161.6" width="1" height="1.8" fill="#6a9955"/><rect x="1834" y="161.6" width="1" height="1.8" fill="#6a9955"/><rect x="1836" y="161.6" width="1" height="1.8" fill="#6a9955"/><rect x="1838" y="161.6" width="1" height="1.8" fill="#6a9955"/><rect x="1789" y="163.6" width="2" height="1.8" fill="#6a9955"/><rect x="1792" y="163.6" width="12" height="1.8" fill="#6a9955"/><rect x="1805" y="163.6" width="6" height="1.8" fill="#6a9955"/><rect x="1812" y="163.6" width="9" height="1.8" fill="#6a9955"/><rect x="1822" y="163.6" width="8" height="1.8" fill="#6a9955"/><rect x="1789" y="165.6" width="2" height="1.8" fill="#6a9955"/><rect x="1792" y="165.6" width="6" height="1.8" fill="#6a9955"/><rect x="1799" y="165.6" width="1" height="1.8" fill="#6a9955"/><rect x="1801" y="165.6" width="10" height="1.8" fill="#6a9955"/><rect x="1812" y="165.6" width="3" height="1.8" fill="#6a9955"/><rect x="1819" y="165.6" width="8" height="1.8" fill="#6a9955"/><rect x="1828" y="165.6" width="1" height="1.8" fill="#6a9955"/><rect x="1830" y="165.6" width="1" height="1.8" fill="#6a9955"/><rect x="1832" y="165.6" width="1" height="1.8" fill="#6a9955"/><rect x="1834" y="165.6" width="1" height="1.8" fill="#6a9955"/><rect x="1836" y="165.6" width="1" height="1.8" fill="#6a9955"/><rect x="1838" y="165.6" width="1" height="1.8" fill="#6a9955"/><rect x="1789" y="167.6" width="2" height="1.8" fill="#6a9955"/><rect x="1792" y="167.6" width="12" height="1.8" fill="#6a9955"/><rect x="1805" y="167.6" width="6" height="1.8" fill="#6a9955"/><rect x="1812" y="167.6" width="9" height="1.8" fill="#6a9955"/><rect x="1822" y="167.6" width="8" height="1.8" fill="#6a9955"/><rect x="1789" y="171.6" width="6" height="1.8" fill="#9cdcfe"/><rect x="1796" y="171.6" width="1" height="1.8" fill="#d4d4d4"/><rect x="1798" y="171.6" width="8" height="1.8" fill="#dcdcaa"/><rect x="1806" y="171.6" width="2" height="1.8" fill="#d4d4d4"/><rect x="1808" y="171.6" width="4" height="1.8" fill="#b5cea8"/><rect x="1812" y="171.6" width="2" height="1.8" fill="#d4d4d4"/><rect x="1818" y="171.6" width="8" height="1.8" fill="#6a9955"/><rect x="1827" y="171.6" width="1" height="1.8" fill="#6a9955"/><rect x="1829" y="171.6" width="1" height="1.8" fill="#6a9955"/><rect x="1831" y="171.6" width="1" height="1.8" fill="#6a9955"/><rect x="1833" y="171.6" width="8" height="1.8" fill="#6a9955"/><rect x="1842" y="171.6" width="1" height="1.8" fill="#6a9955"/><rect x="1844" y="171.6" width="6" height="1.8" fill="#6a9955"/><rect x="1789" y="173.6" width="6" height="1.8" fill="#dcdcaa"/><rect x="1795" y="173.6" width="1" height="1.8" fill="#d4d4d4"/><rect x="1796" y="173.6" width="5" height="1.8" fill="#ce9178"/><rect x="1802" y="173.6" width="6" height="1.8" fill="#ce9178"/><rect x="1809" y="173.6" width="8" height="1.8" fill="#ce9178"/><rect x="1817" y="173.6" width="1" height="1.8" fill="#d4d4d4"/><rect x="1819" y="173.6" width="6" height="1.8" fill="#9cdcfe"/><rect x="1825" y="173.6" width="2" height="1.8" fill="#d4d4d4"/><rect x="1789" y="175.6" width="6" height="1.8" fill="#9cdcfe"/><rect x="1796" y="175.6" width="1" height="1.8" fill="#d4d4d4"/><rect x="1798" y="175.6" width="9" height="1.8" fill="#dcdcaa"/><rect x="1807" y="175.6" width="2" height="1.8" fill="#d4d4d4"/><rect x="1809" y="175.6" width="4" height="1.8" fill="#b5cea8"/><rect x="1813" y="175.6" width="2" height="1.8" fill="#d4d4d4"/><rect x="1819" y="175.6" width="8" height="1.8" fill="#6a9955"/><rect x="1828" y="175.6" width="1" height="1.8" fill="#6a9955"/><rect x="1830" y="175.6" width="1" height="1.8" fill="#6a9955"/><rect x="1832" y="175.6" width="1" height="1.8" fill="#6a9955"/><rect x="1834" y="175.6" width="20" height="1.8" fill="#6a9955"/><rect x="1855" y="175.6" width="1" height="1.8" fill="#6a9955"/><rect x="1857" y="175.6" width="5" height="1.8" fill="#6a9955"/><rect x="1789" y="177.6" width="6" height="1.8" fill="#dcdcaa"/><rect x="1795" y="177.6" width="1" height="1.8" fill="#d4d4d4"/><rect x="1796" y="177.6" width="5" height="1.8" fill="#ce9178"/><rect x="1802" y="177.6" width="6" height="1.8" fill="#ce9178"/><rect x="1809" y="177.6" width="8" height="1.8" fill="#ce9178"/><rect x="1817" y="177.6" width="1" height="1.8" fill="#d4d4d4"/><rect x="1819" y="177.6" width="6" height="1.8" fill="#9cdcfe"/><rect x="1825" y="177.6" width="2" height="1.8" fill="#d4d4d4"/><rect x="1789" y="179.6" width="6" height="1.8" fill="#9cdcfe"/><rect x="1796" y="179.6" width="1" height="1.8" fill="#d4d4d4"/><rect x="1798" y="179.6" width="7" height="1.8" fill="#dcdcaa"/><rect x="1805" y="179.6" width="1" height="1.8" fill="#d4d4d4"/><rect x="1806" y="179.6" width="1" height="1.8" fill="#b5cea8"/><rect x="1807" y="179.6" width="1" height="1.8" fill="#d4d4d4"/><rect x="1809" y="179.6" width="1" height="1.8" fill="#b5cea8"/><rect x="1810" y="179.6" width="2" height="1.8" fill="#d4d4d4"/><rect x="1816" y="179.6" width="8" height="1.8" fill="#6a9955"/><rect x="1825" y="179.6" width="1" height="1.8" fill="#6a9955"/><rect x="1827" y="179.6" width="1" height="1.8" fill="#6a9955"/><rect x="1829" y="179.6" width="1" height="1.8" fill="#6a9955"/><rect x="1831" y="179.6" width="4" height="1.8" fill="#6a9955"/><rect x="1836" y="179.6" width="1" height="1.8" fill="#6a9955"/><rect x="1838" y="179.6" width="2" height="1.8" fill="#6a9955"/><rect x="1789" y="181.6" width="6" height="1.8" fill="#dcdcaa"/><rect x="1795" y="181.6" width="1" height="1.8" fill="#d4d4d4"/><rect x="1796" y="181.6" width="5" height="1.8" fill="#ce9178"/><rect x="1802" y="181.6" width="6" height="1.8" fill="#ce9178"/><rect x="1809" y="181.6" width="8" height="1.8" fill="#ce9178"/><rect x="1817" y="181.6" width="1" height="1.8" fill="#d4d4d4"/><rect x="1819" y="181.6" width="6" height="1.8" fill="#9cdcfe"/><rect x="1825" y="181.6" width="2" height="1.8" fill="#d4d4d4"/><rect x="1789" y="183.6" width="6" height="1.8" fill="#9cdcfe"/><rect x="1796" y="183.6" width="1" height="1.8" fill="#d4d4d4"/><rect x="1798" y="183.6" width="8" height="1.8" fill="#dcdcaa"/><rect x="1806" y="183.6" width="2" height="1.8" fill="#d4d4d4"/><rect x="1808" y="183.6" width="1" height="1.8" fill="#b5cea8"/><rect x="1809" y="183.6" width="1" height="1.8" fill="#d4d4d4"/><rect x="1811" y="183.6" width="1" height="1.8" fill="#b5cea8"/><rect x="1812" y="183.6" width="2" height="1.8" fill="#d4d4d4"/><rect x="1818" y="183.6" width="8" height="1.8" fill="#6a9955"/><rect x="1827" y="183.6" width="1" height="1.8" fill="#6a9955"/><rect x="1829" y="183.6" width="1" height="1.8" fill="#6a9955"/><rect x="1831" y="183.6" width="1" height="1.8" fill="#6a9955"/><rect x="1833" y="183.6" width="17" height="1.8" fill="#6a9955"/><rect x="1851" y="183.6" width="1" height="1.8" fill="#6a9955"/><rect x="1853" y="183.6" width="2" height="1.8" fill="#6a9955"/><rect x="1789" y="185.6" width="6" height="1.8" fill="#dcdcaa"/><rect x="1795" y="185.6" width="1" height="1.8" fill="#d4d4d4"/><rect x="1796" y="185.6" width="5" height="1.8" fill="#ce9178"/><rect x="1802" y="185.6" width="6" height="1.8" fill="#ce9178"/><rect x="1809" y="185.6" width="8" height="1.8" fill="#ce9178"/><rect x="1817" y="185.6" width="1" height="1.8" fill="#d4d4d4"/><rect x="1819" y="185.6" width="6" height="1.8" fill="#9cdcfe"/><rect x="1825" y="185.6" width="2" height="1.8" fill="#d4d4d4"/><rect x="1789" y="187.6" width="6" height="1.8" fill="#c586c0"/><rect x="1796" y="187.6" width="1" height="1.8" fill="#b5cea8"/><rect x="1797" y="187.6" width="1" height="1.8" fill="#d4d4d4"/><rect x="1785" y="189.6" width="1" height="1.8" fill="#d4d4d4"/></g></svg>
<div class="a" style="left:1896px;top:130px;width:1px;height:574px;background:#383838;"></div>
<div class="a" style="left:1897px;top:385px;width:13px;height:2px;background:#b8b890;opacity:0.9"></div>
<div class="a" style="left:1897px;top:387px;width:13px;height:9px;background:#4b4b00;opacity:0.9"></div>
<svg style="left:0;top:0" width="1" height="1"><g fill="none" stroke="#c5c5c5" stroke-width="1.2"><path d="M1794.5 84.5v7M1794.5 84.5l10 6-5.5 3.6"/><path d="M1791 95.2a2.3 2.3 0 0 1 4.6 0v2.6a2.3 2.3 0 0 1 -4.6 0z" stroke-width="1.3"/><path d="M1789 95.5h2M1795.6 95.5h2M1789 98.5h2M1795.6 98.5h2M1791.8 92.8l.8 1M1794.8 92.8l-.8 1" stroke-width="1"/><path d="M1810 90.5l3 3 3-3"/></g></svg>
<svg style="left:0;top:0" width="1" height="1"><g fill="none" stroke="#c5c5c5" stroke-width="1.3"><path d="M1842.36 90.11 L1842.36 92.89 L1840.33 93.43 L1840.28 93.55 L1841.33 95.37 L1839.37 97.33 L1837.55 96.28 L1837.43 96.33 L1836.89 98.36 L1834.11 98.36 L1833.57 96.33 L1833.45 96.28 L1831.63 97.33 L1829.67 95.37 L1830.72 93.55 L1830.67 93.43 L1828.64 92.89 L1828.64 90.11 L1830.67 89.57 L1830.72 89.45 L1829.67 87.63 L1831.63 85.67 L1833.45 86.72 L1833.57 86.67 L1834.11 84.64 L1836.89 84.64 L1837.43 86.67 L1837.55 86.72 L1839.37 85.67 L1841.33 87.63 L1840.28 89.45 L1840.33 89.57Z"/><circle cx="1835.5" cy="91.5" r="2.2"/></g></svg>
<svg style="left:0;top:0" width="1" height="1"><g fill="none" stroke="#c5c5c5" stroke-width="1.2"><rect x="1855.5" y="85" width="13" height="13"/><path d="M1862 85v13"/></g></svg>
<svg style="left:0;top:0" width="1" height="1"><g fill="#c5c5c5"><circle cx="1882" cy="91.5" r="1.2"/><circle cx="1887" cy="91.5" r="1.2"/><circle cx="1892" cy="91.5" r="1.2"/></g></svg>
<div class="a" style="left:1113px;top:75px;width:178px;height:31px;background:#333333;box-shadow:0 2px 8px #000000a0"></div>
<div class="a" style="left:1090px;top:60px;width:240px;height:14px;background:#ffffff;"></div>
<svg style="left:0;top:0" width="1" height="1"><g fill="#a8a8a8"><rect x="1126" y="85" width="2" height="2"/><rect x="1130.5" y="85" width="2" height="2"/><rect x="1126" y="89" width="2" height="2"/><rect x="1130.5" y="89" width="2" height="2"/><rect x="1126" y="93" width="2" height="2"/><rect x="1130.5" y="93" width="2" height="2"/></g><g fill="none" stroke="#75beff" stroke-width="1.5"><path d="M1143 84.5v11"/><path d="M1147 85v10l8.5-5z"/><path d="M1169 89.5a5.5 5.5 0 0 1 10.5-2"/><path d="M1180.5 84v4.5h-4.5"/><path d="M1198 82.5v8"/><path d="M1194.5 87.5l3.5 3.5 3.5-3.5"/><path d="M1224 92v-9"/><path d="M1220.5 86l3.5-3.5 3.5 3.5"/></g><g fill="#75beff"><circle cx="1173.8" cy="94.5" r="1.9"/><circle cx="1198" cy="94.5" r="1.9"/><circle cx="1224" cy="94.5" r="1.9"/></g><g fill="none" stroke="#89d185" stroke-width="1.5"><path d="M1247 86.5a5.5 5.5 0 1 1 -1 5"/><path d="M1246 83v4h4"/></g><rect x="1271.5" y="84.5" width="11.2" height="11.2" fill="none" stroke="#f48771" stroke-width="1.5"/></svg>
<div class="a" style="left:536px;top:704px;width:1374px;height:282px;background:#1e1e1e;"></div>
<div class="a" style="left:536px;top:704px;width:1374px;height:1px;background:#414141;"></div>
<div class="t" style="left:555.5px;top:717px;font-size:11px;color:#969696;letter-spacing:-0.4px">问题</div>
<div class="t" style="left:600.5px;top:717px;font-size:11px;color:#969696;letter-spacing:-0.4px">输出</div>
<div class="t" style="left:646.5px;top:717px;font-size:11px;color:#969696;letter-spacing:-0.4px">调试控制台</div>
<div class="t" style="left:724px;top:717px;font-size:11px;color:#e7e7e7;letter-spacing:-0.4px">终端</div>
<div class="a" style="left:722px;top:733px;width:27px;height:1px;background:#e7e7e7;"></div>
<svg style="left:0;top:0" width="1" height="1"><g fill="none" stroke="#c5c5c5" stroke-width="1.3"><path d="M1606 718.5l9.5 10M1605.8 728.5l7.5-7.5" stroke-width="2.2" stroke-linecap="round"/><path d="M1613.5 717a3 3 0 1 0 4.5 1.5" stroke-width="1.6"/><path d="M1747 723l3 3 6-8"/><path d="M1779 716v13M1772.5 722.5h13"/><path d="M1791 721l3 3 3-3"/><rect x="1811.5" y="716" width="12.5" height="13"/><path d="M1817.75 716v13"/><path d="M1837 718.5h12M1839 719v10.5h8V719M1841 716.5h4M1841.5 721v6M1844.5 721v6"/><path d="M1864.5 725.5l4.5-4.5 4.5 4.5"/><path d="M1886.5 717.5l9 9M1895.5 717.5l-9 9"/></g></svg>
<div class="t" style="left:1623px;top:716.5px;font-size:10.6px;color:#cccccc;">Run RISCV-QEMU - Task</div>
<div class="term" style="top:748.4px;">CC -[M] <span class="cj">正在构建</span>... main.elf</div>
<div class="term" style="top:764.2px;">CC -[M] <span class="cj">正在构建</span>... addsub.o</div>
<div class="term" style="top:780.0px;">CC -[M] <span class="cj">正在构建</span>... addi.o</div>
<div class="term" style="top:795.8px;">CC -[M] <span class="cj">正在构建</span>... slti.o</div>
<div class="term" style="top:811.6px;">CC -[M] <span class="cj">正在构建</span>... main.o</div>
<div class="term" style="top:843.1px;font-weight:bold;"><span class="cj">终端将被任务重用，按任意键关闭。</span></div>
<div class="term" style="top:874.7px;font-weight:bold;">&gt; Executing task: echo Starting RISCV-QEMU&amp;qemu-riscv32 -g 1234 ./*.elf &lt;</div>
<div class="term" style="top:906.3px;">Starting RISCV-QEMU</div>
<div class="term" style="top:922.1px;">This result is:1</div>
<div class="term" style="top:937.9px;">This result is:0</div>
<div class="term" style="top:953.7px;">This result is:1</div>
<div class="a" style="left:555px;top:968.5px;width:8px;height:16px;background:transparent;border:1px solid #cccccc"></div>
<div class="a" style="left:10px;top:986px;width:1900px;height:22px;background:#cc6633;"></div>
<div class="a" style="left:10px;top:986px;width:34px;height:22px;background:#16825d;"></div>
<svg style="left:0;top:0" width="1" height="1"><g fill="none" stroke="#ffffff" stroke-width="1.2"><path d="M22 993.5l4 4-4 4"/><path d="M32 991l-4 4 4 4"/></g></svg>
<svg style="left:0;top:0" width="1" height="1"><g fill="none" stroke="#ffffff" stroke-width="1.1"><circle cx="58.5" cy="997" r="6"/><path d="M56 994.5l5 5M61 994.5l-5 5"/><path d="M84 991l6 11h-12z"/><path d="M118 993l9 9M117.8 1002l7-7" stroke-width="2" stroke-linecap="round"/><path d="M125 991.5a2.8 2.8 0 1 0 4.2 1.4" stroke-width="1.5"/><path d="M160 996l5 2.5-5 2.5"/><rect x="156.5" y="998" width="4" height="4"/></g></svg>
<div class="t" style="left:67.5px;top:992px;font-size:12px;color:#ffffff;">0</div>
<div class="t" style="left:93px;top:992px;font-size:12px;color:#ffffff;">0</div>
<div class="t" style="left:133px;top:992px;font-size:12px;color:#ffffff;">1</div>
<div class="t" style="left:172px;top:992px;font-size:12px;color:#ffffff;">(gdb) 启动 (16)</div>
<div class="t" style="left:1576px;top:992px;font-size:12px;color:#ffffff;">行 28，列 1</div>
<div class="t" style="left:1653px;top:992px;font-size:12px;color:#ffffff;">空格: 4</div>
<div class="t" style="left:1705px;top:992px;font-size:12px;color:#ffffff;">UTF-8</div>
<div class="t" style="left:1753px;top:992px;font-size:12px;color:#ffffff;">LF</div>
<div class="t" style="left:1782px;top:992px;font-size:12px;color:#ffffff;">C</div>
<div class="t" style="left:1806px;top:992px;font-size:12px;color:#ffffff;">Linux</div>
<svg style="left:0;top:0" width="1" height="1"><g fill="none" stroke="#ffffff" stroke-width="1.1"><path d="M1853 1002.5l4-5M1856 992h7.5v5h-6.5l3.5 5.5"/><path d="M1884 1001.5h11M1885.5 1001.5v-5a4 4 0 0 1 8 0v5M1888 1003.5h3"/></g><circle cx="1894" cy="993" r="2.3" fill="#ffffff"/></svg>
<div class="a" style="left:535px;top:588.5px;width:736px;height:44.5px;border:4.5px solid #fd1b4c"></div>
<div class="a" style="left:537px;top:946.8px;width:711.5px;height:36.5px;border:4.5px solid #fd1b4c"></div>
</body></html>
